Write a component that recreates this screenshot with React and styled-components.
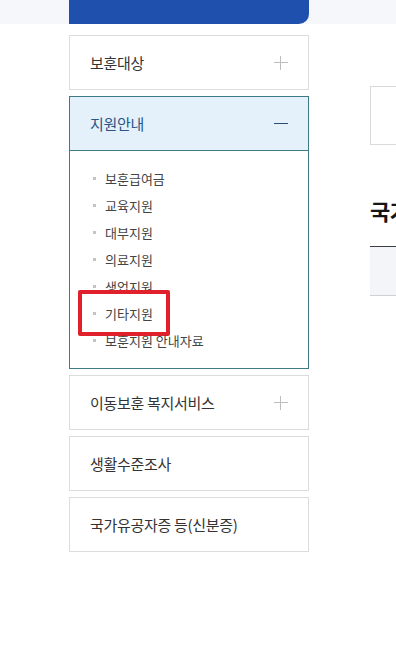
import React from 'react'
import styled, { createGlobalStyle } from 'styled-components'

const GlobalStyle = createGlobalStyle`
  html, body { margin: 0; padding: 0; background: #fff; }
  body {
    font-family: "Noto Sans CJK KR", "Noto Sans", sans-serif;
    overflow: hidden;
  }
`

const Page = styled.div`
  width: 396px;
  height: 667px;
  overflow: hidden;
  background: #fff;
`
const TopBand = styled.div`
  height: 24px;
  padding-left: 69px;
  background: #f5f7fb;
`
const TitleBar = styled.div`
  width: 240px;
  height: 24px;
  background: #1f50ae;
  border-bottom-right-radius: 10px;
`
const Main = styled.div`
  display: flex;
  gap: 61px;
  padding: 11px 0 0 69px;
`
const Sidebar = styled.ul`
  flex: 0 0 240px;
  display: flex;
  flex-direction: column;
  gap: 6px;
  margin: 0;
  padding: 0;
  list-style: none;
`
const MenuBox = styled.li`
  border: 1px solid ${p => (p.$open ? '#3d7c86' : '#dcdcdc')};
`
const MenuHead = styled.div`
  height: 53px;
  display: flex;
  align-items: center;
  justify-content: space-between;
  padding: 0 20px 0 20px;
  font-size: 15px;
  letter-spacing: -0.3px;
  color: ${p => (p.$open ? '#2a5585' : '#333')};
  background: ${p => (p.$open ? '#e4f1fb' : '#fff')};
  border-bottom: ${p => (p.$open ? '1px solid #3d7c86' : 'none')};
`
const Toggle = styled.span`
  position: relative;
  width: 14px;
  height: 14px;
  &::before, &::after {
    content: '';
    position: absolute;
    background: ${p => (p.$open ? '#2a4e72' : '#bdbdbd')};
  }
  &::before { left: 0; right: 0; top: 6px; height: 1px; }
  &::after {
    display: ${p => (p.$open ? 'none' : 'block')};
    top: 0; bottom: 0; left: 6px; width: 1px;
  }
`
const SubList = styled.ul`
  margin: 0;
  padding: 14px 0 14px;
  list-style: none;
  background: #fff;
`
const SubItem = styled.li`
  position: relative;
  height: 27px;
  line-height: 27px;
  padding-left: 35px;
  font-size: 13px;
  color: #444;
  &::before {
    content: '';
    position: absolute;
    left: 23px;
    top: 12px;
    width: 3px;
    height: 3px;
    background: #c4c4c4;
  }
`
const Highlight = styled.span`
  position: absolute;
  left: 8px;
  top: -10px;
  width: 92px;
  height: 46px;
  box-sizing: border-box;
  border: 4px solid #e0202b;
  border-radius: 2px;
`
const Content = styled.div`
  flex: 1;
  min-width: 0;
  padding-top: 51px;
`
const SearchBox = styled.div`
  height: 57px;
  border: 1px solid #dadada;
  border-right: none;
`
const Heading = styled.h2`
  margin: 50px 0 0;
  font-size: 22px;
  line-height: 30px;
  font-weight: 700;
  color: #151515;
  white-space: nowrap;
  letter-spacing: -0.5px;
`
const TableHead = styled.div`
  margin-top: 21px;
  height: 48px;
  background: #f4f5f9;
  border-top: 1px solid #3b3d48;
  border-bottom: 1px solid #cfcfd4;
`

const menus = [
  { label: '보훈대상', toggle: true },
  {
    label: '지원안내',
    toggle: true,
    open: true,
    items: ['보훈급여금', '교육지원', '대부지원', '의료지원', '생업지원', '기타지원', '보훈지원 안내자료'],
  },
  { label: '이동보훈 복지서비스', toggle: true },
  { label: '생활수준조사' },
  { label: '국가유공자증 등(신분증)' },
]

export default function App() {
  return (
    <Page>
      <GlobalStyle />
      <TopBand>
        <TitleBar />
      </TopBand>
      <Main>
        <Sidebar>
          {menus.map(m => (
            <MenuBox key={m.label} $open={m.open}>
              <MenuHead $open={m.open}>
                {m.label}
                {m.toggle && <Toggle $open={m.open} />}
              </MenuHead>
              {m.items && (
                <SubList>
                  {m.items.map(it => (
                    <SubItem key={it}>
                      {it}
                      {it === '기타지원' && <Highlight />}
                    </SubItem>
                  ))}
                </SubList>
              )}
            </MenuBox>
          ))}
        </Sidebar>
        <Content>
          <SearchBox />
          <Heading>국가유공자 예우</Heading>
          <TableHead />
        </Content>
      </Main>
    </Page>
  )
}
